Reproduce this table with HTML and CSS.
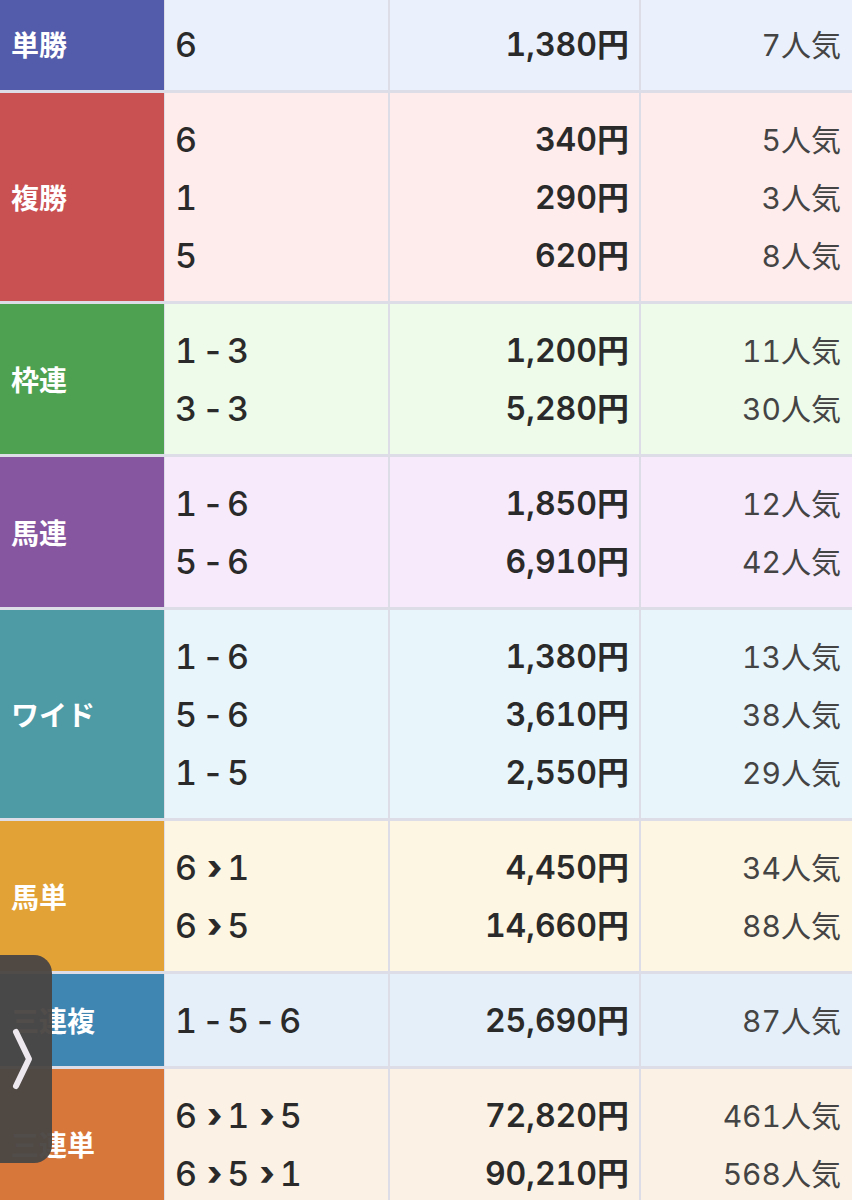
FILE: index.html
```html
<!DOCTYPE html>
<html lang="ja">
<head>
<meta charset="utf-8">
<title>払戻金</title>
<link rel="stylesheet" href="styles.css">
</head>
<body>
<div class="table">
  <div class="row c-tansho">
    <div class="label">単勝</div>
    <div class="cell nums"><div>6</div></div>
    <div class="cell pay"><div>1,380円</div></div>
    <div class="cell pop"><div>7人気</div></div>
  </div>
  <div class="row c-fukusho">
    <div class="label">複勝</div>
    <div class="cell nums"><div>6</div><div>1</div><div>5</div></div>
    <div class="cell pay"><div>340円</div><div>290円</div><div>620円</div></div>
    <div class="cell pop"><div>5人気</div><div>3人気</div><div>8人気</div></div>
  </div>
  <div class="row c-wakuren">
    <div class="label">枠連</div>
    <div class="cell nums"><div>1<span class="dash">-</span>3</div><div>3<span class="dash">-</span>3</div></div>
    <div class="cell pay"><div>1,200円</div><div>5,280円</div></div>
    <div class="cell pop"><div>11人気</div><div>30人気</div></div>
  </div>
  <div class="row c-umaren">
    <div class="label">馬連</div>
    <div class="cell nums"><div>1<span class="dash">-</span>6</div><div>5<span class="dash">-</span>6</div></div>
    <div class="cell pay"><div>1,850円</div><div>6,910円</div></div>
    <div class="cell pop"><div>12人気</div><div>42人気</div></div>
  </div>
  <div class="row c-wide">
    <div class="label">ワイド</div>
    <div class="cell nums"><div>1<span class="dash">-</span>6</div><div>5<span class="dash">-</span>6</div><div>1<span class="dash">-</span>5</div></div>
    <div class="cell pay"><div>1,380円</div><div>3,610円</div><div>2,550円</div></div>
    <div class="cell pop"><div>13人気</div><div>38人気</div><div>29人気</div></div>
  </div>
  <div class="row c-umatan">
    <div class="label">馬単</div>
    <div class="cell nums"><div>6<span class="arrow">›</span>1</div><div>6<span class="arrow">›</span>5</div></div>
    <div class="cell pay"><div>4,450円</div><div>14,660円</div></div>
    <div class="cell pop"><div>34人気</div><div>88人気</div></div>
  </div>
  <div class="row c-sanrenpuku">
    <div class="label">三連複</div>
    <div class="cell nums"><div>1<span class="dash">-</span>5<span class="dash">-</span>6</div></div>
    <div class="cell pay"><div>25,690円</div></div>
    <div class="cell pop"><div>87人気</div></div>
  </div>
  <div class="row c-sanrentan">
    <div class="label">三連単</div>
    <div class="cell nums"><div>6<span class="arrow">›</span>1<span class="arrow">›</span>5</div><div>6<span class="arrow">›</span>5<span class="arrow">›</span>1</div></div>
    <div class="cell pay"><div>72,820円</div><div>90,210円</div></div>
    <div class="cell pop"><div>461人気</div><div>568人気</div></div>
  </div>
</div>
<div class="side-tab">
  <svg class="chev" width="24" height="64" viewBox="0 0 24 64" aria-hidden="true">
    <path d="M5 5 L18 32 L5 59" fill="none" stroke="#ece8ee" stroke-width="6" stroke-linecap="round" stroke-linejoin="round"/>
  </svg>
</div>
</body>
</html>
```

FILE: styles.css
```css
* { box-sizing: border-box; }
html, body {
  margin: 0;
  padding: 0;
  background: #ffffff;
  overflow: hidden;
}
body {
  width: 852px;
  height: 1200px;
  position: relative;
  font-family: "Noto Sans CJK JP", "Noto Sans", sans-serif;
}
.table {
  margin-top: -2px;
  display: flex;
  flex-direction: column;
  background: #dcdde6;
  gap: 3px;
}
.row {
  display: grid;
  grid-template-columns: 164px 224px 251px 213px;
}
.label {
  display: flex;
  align-items: center;
  padding-left: 11px;
  color: #ffffff;
  font-weight: 700;
  font-size: 28px;
}
.cell {
  padding: 18px 0 16px;
  line-height: 58px;
  white-space: nowrap;
  font-family: Inter, "Noto Sans CJK JP", sans-serif;
  font-variant-numeric: tabular-nums;
}
.nums {
  border-left: 1px solid #dcdde6;
  padding-left: 10px;
  font-size: 34px;
  font-weight: 500;
  color: #2a2a2a;
}
.dash {
  display: inline-block;
  margin: 0 3px 0 5px;
}
.arrow {
  display: inline-block;
  margin: 0 5px 0 10px;
  font-weight: 800;
  font-size: 34px;
  position: relative;
  top: -1px;
}
.pay {
  border-left: 2px solid #dcdde6;
  padding-right: 10px;
  text-align: right;
  font-size: 32px;
  font-weight: 600;
  color: #2a2a2a;
}
.pop {
  border-left: 2px solid #dcdde6;
  padding-right: 11px;
  text-align: right;
  font-size: 30px;
  font-weight: 400;
  color: #444444;
}

.c-tansho .label { background: #535bab; }
.c-tansho .cell { background: #eaf1fc; }
.c-fukusho .label { background: #c95152; }
.c-fukusho .cell { background: #feecec; }
.c-wakuren .label { background: #4fa152; }
.c-wakuren .cell { background: #eefaea; }
.c-umaren .label { background: #8656a0; }
.c-umaren .cell { background: #f6eafb; }
.c-wide .label { background: #4e9ba5; }
.c-wide .cell { background: #e8f5fb; }
.c-umatan .label { background: #e2a236; }
.c-umatan .cell { background: #fdf6e3; }
.c-sanrenpuku .label { background: #3f86b3; }
.c-sanrenpuku .cell { background: #e4eff9; }
.c-sanrentan .label { background: #d8773a; }
.c-sanrentan .cell { background: #fbf2e5; }

.side-tab {
  position: absolute;
  left: -20px;
  top: 955px;
  width: 72px;
  height: 208px;
  border-radius: 18px;
  background: rgba(74, 70, 68, 0.96);
  display: flex;
  align-items: center;
  justify-content: flex-end;
  padding-right: 17px;
}
.chev { display: block; }
```
